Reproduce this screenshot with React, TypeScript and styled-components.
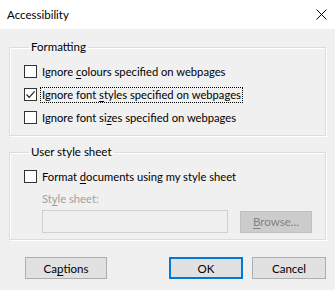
import React from 'react';
import styled, { createGlobalStyle } from 'styled-components';

const Global = createGlobalStyle`
  html, body { margin: 0; padding: 0; background: #f0f0f0; }
  body { font-family: Lato, "Noto Sans", sans-serif; font-size: 11px; color: #000; }
`;

const Dialog = styled.div` width: 335px; height: 290px; display: flex; flex-direction: column; background: #f0f0f0; `;
const TitleBar = styled.div` height: 29px; background: #fff; display: flex; align-items: center; justify-content: space-between; padding: 0 8px 0 7px; box-sizing: border-box; `;
const Title = styled.span` font-size: 11.5px; line-height: 16px; `;
const Body = styled.div` display: flex; flex-direction: column; padding: 10px 9px 0 9px; `;

const Group = styled.fieldset<{ $gap?: number }>`
  margin: ${({ $gap }) => $gap ?? 0}px 0 0 0;
  padding: 5px 8px 6px 14px;
  border: 1px solid #dcdcdc;
  box-shadow: inset 1px 1px 0 #fff, 1px 1px 0 #fff;
  min-inline-size: auto;
`;
const Legend = styled.legend` padding: 0 2px; margin-left: 5px; line-height: 16px; font-size: 11.5px; `;

const Row = styled.label` display: flex; align-items: center; height: 23px; gap: 3px; `;
const Box = styled.span` width: 11px; height: 11px; border: 1px solid #333; background: #fff; display: inline-flex; align-items: center; justify-content: center; flex: none; `;
const Text = styled.span<{ $focus?: boolean }>`
  font-size: 11.2px;
  line-height: 14px;
  padding: 0 1px;
  border: 1px dotted ${({ $focus }) => ($focus ? '#000' : 'transparent')};
  white-space: nowrap;
`;
const Key = styled.u` text-underline-offset: 2px; `;

const Sub = styled.div` display: flex; flex-direction: column; padding-left: 18px; `;
const SubLabel = styled.span` color: #a0a0a0; line-height: 16px; margin-top: 3px; font-size: 11.2px; `;
const InputRow = styled.div` display: flex; align-items: center; gap: 12px; margin-top: 3px; `;
const Input = styled.div` width: 186px; height: 23px; box-sizing: border-box; border: 1px solid #d0d0d0; background: #f0f0f0; `;

const Button = styled.button<{ $w: number; $default?: boolean; $disabled?: boolean }>`
  width: ${({ $w }) => $w}px;
  height: 22px;
  box-sizing: border-box;
  font: inherit;
  font-size: 11.5px;
  padding: 0;
  color: ${({ $disabled }) => ($disabled ? '#838383' : '#000')};
  background: ${({ $disabled }) => ($disabled ? '#cccccc' : '#e1e1e1')};
  border: ${({ $default, $disabled }) => ($default ? '2px solid #0078d7' : `1px solid ${$disabled ? '#bfbfbf' : '#adadad'}`)};
`;
const Footer = styled.div` display: flex; align-items: center; padding: 17px 9px 0 25px; `;
const Spacer = styled.div` flex: 1; `;
const Gap = styled.div<{ $w: number }>` width: ${({ $w }) => $w}px; `;

function Check({ on }: { on?: boolean }) {
  return (
    <Box>
      {on && (
        <svg width="11" height="11" viewBox="0 0 11 11">
          <path d="M1.5 5.5 L4.2 8.3 L9.6 2.4" fill="none" stroke="#222" strokeWidth="1.2" />
        </svg>
      )}
    </Box>
  );
}

export default function App() {
  return (
    <Dialog>
      <Global />
      <TitleBar>
        <Title>Accessibility</Title>
        <svg width="11" height="11" viewBox="0 0 11 11">
          <path d="M0.5 0.5 L10.5 10.5 M10.5 0.5 L0.5 10.5" stroke="#000" strokeWidth="1" />
        </svg>
      </TitleBar>
      <Body>
        <Group>
          <Legend>Formatting</Legend>
          <Row><Check /><Text>Ignore <Key>c</Key>olours specified on webpages</Text></Row>
          <Row><Check on /><Text $focus>Ignore font <Key>s</Key>tyles specified on webpages</Text></Row>
          <Row><Check /><Text>Ignore font si<Key>z</Key>es specified on webpages</Text></Row>
        </Group>
        <Group $gap={8}>
          <Legend>User style sheet</Legend>
          <Row><Check /><Text>Format <Key>d</Key>ocuments using my style sheet</Text></Row>
          <Sub>
            <SubLabel>St<Key>y</Key>le sheet:</SubLabel>
            <InputRow>
              <Input />
              <Button $w={72} $disabled><Key>B</Key>rowse...</Button>
            </InputRow>
          </Sub>
        </Group>
      </Body>
      <Footer>
        <Button $w={82}>Ca<Key>p</Key>tions</Button>
        <Spacer />
        <Button $w={74} $default>OK</Button>
        <Gap $w={9} />
        <Button $w={74}>Cancel</Button>
      </Footer>
    </Dialog>
  );
}
